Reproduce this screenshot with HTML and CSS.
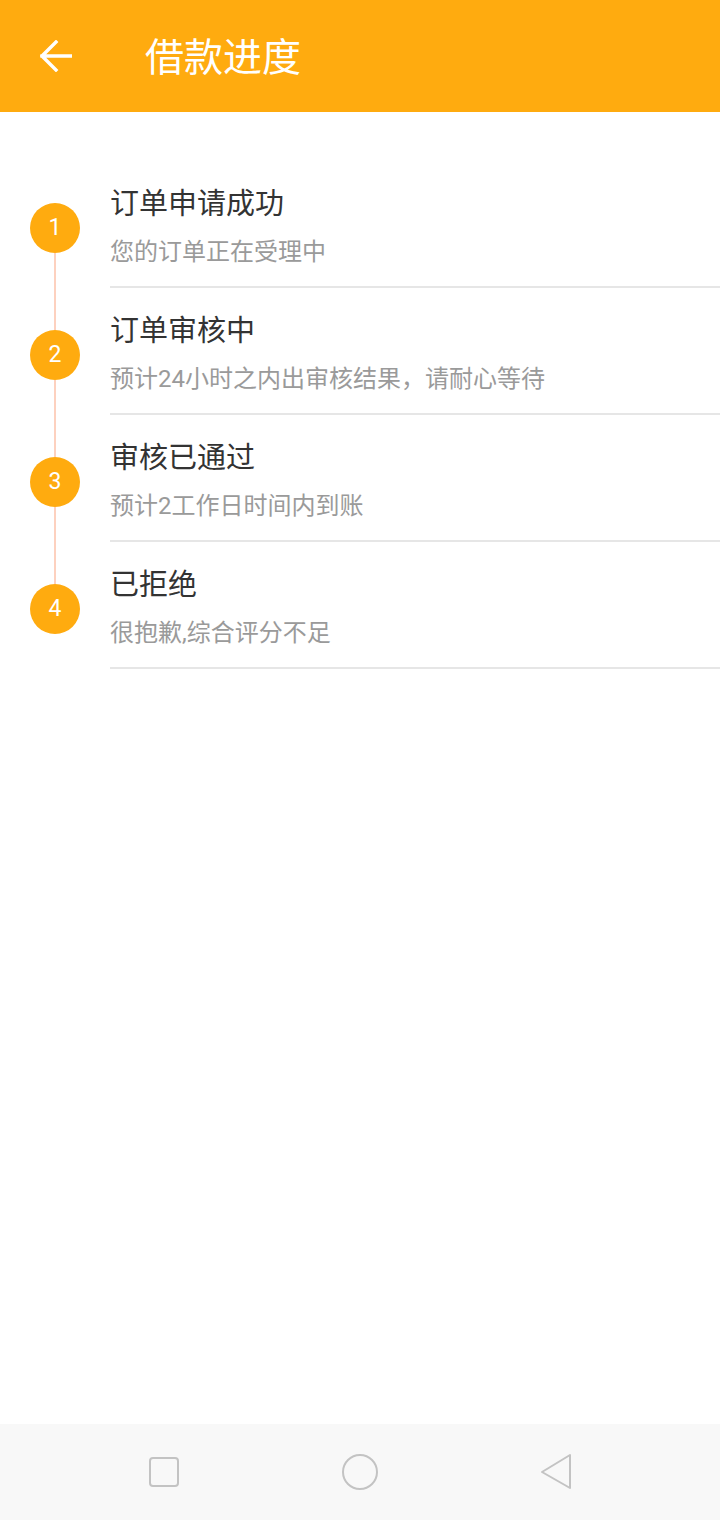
FILE: index.html
```html
<!DOCTYPE html>
<html lang="zh-CN">
<head>
  <meta charset="UTF-8" />
  <title>借款进度</title>
  <meta name="viewport" content="width=device-width, initial-scale=1" />
  <link rel="stylesheet" href="styles.css">
</head>
<body>
  <header class="topbar">
    <span class="back">
      <svg width="32" height="32" viewBox="0 0 32 32">
        <path d="M2 16 H31 M16 2 L2 16 L16 30" fill="none" stroke="#fff" stroke-width="3.4" stroke-linecap="square" />
      </svg>
    </span>
    <h1>借款进度</h1>
  </header>

  <main class="steps">
    <div class="step first">
      <div class="marker">
        <span class="seg seg-top"></span>
        <span class="dot">1</span>
        <span class="seg seg-bottom"></span>
      </div>
      <div class="info">
        <div class="title">订单申请成功</div>
        <div class="desc">您的订单正在受理中</div>
      </div>
    </div>
    <div class="step">
      <div class="marker">
        <span class="seg seg-top"></span>
        <span class="dot">2</span>
        <span class="seg seg-bottom"></span>
      </div>
      <div class="info">
        <div class="title">订单审核中</div>
        <div class="desc">预计24小时之内出审核结果，请耐心等待</div>
      </div>
    </div>
    <div class="step">
      <div class="marker">
        <span class="seg seg-top"></span>
        <span class="dot">3</span>
        <span class="seg seg-bottom"></span>
      </div>
      <div class="info">
        <div class="title">审核已通过</div>
        <div class="desc">预计2工作日时间内到账</div>
      </div>
    </div>
    <div class="step last">
      <div class="marker">
        <span class="seg seg-top"></span>
        <span class="dot">4</span>
        <span class="seg seg-bottom"></span>
      </div>
      <div class="info">
        <div class="title">已拒绝</div>
        <div class="desc">很抱歉,综合评分不足</div>
      </div>
    </div>
  </main>

  <nav class="navbar">
    <span class="nav-btn">
      <svg width="40" height="40" viewBox="0 0 40 40">
        <rect x="6" y="6" width="28" height="28" rx="3" fill="none" stroke="#c3c3c3" stroke-width="2" />
      </svg>
    </span>
    <span class="nav-btn">
      <svg width="40" height="40" viewBox="0 0 40 40">
        <circle cx="20" cy="20" r="17" fill="none" stroke="#c3c3c3" stroke-width="2" />
      </svg>
    </span>
    <span class="nav-btn">
      <svg width="40" height="40" viewBox="0 0 40 40">
        <path d="M34 3 L34 36 L6 20 Z" fill="none" stroke="#c3c3c3" stroke-width="2" stroke-linejoin="round" />
      </svg>
    </span>
  </nav>
</body>
</html>
```

FILE: styles.css
```css
body {
  margin: 0;
  height: 1520px;
  display: flex;
  flex-direction: column;
  font-family: Roboto, "Noto Sans CJK SC", sans-serif;
  background: #fff;
}
.topbar {
  height: 112px;
  flex-shrink: 0;
  background: #ffab0f;
  display: flex;
  align-items: center;
  padding-left: 40px;
  box-sizing: border-box;
}
.back {
  width: 32px;
  height: 32px;
  display: flex;
}
.topbar h1 {
  margin: 0 0 0 73px;
  font-size: 39px;
  font-weight: normal;
  color: #fff;
  line-height: 44px;
  padding-top: 4px;
}
.steps {
  flex: 1;
  padding-top: 49px;
}
.step {
  display: flex;
  height: 127px;
}
.marker {
  width: 110px;
  flex-shrink: 0;
  display: flex;
  flex-direction: column;
  align-items: center;
}
.seg {
  width: 2px;
  background: #fdd1bf;
}
.seg-top {
  height: 42px;
}
.seg-bottom {
  flex: 1;
}
.first .seg-top,
.last .seg-bottom {
  background: transparent;
}
.dot {
  width: 50px;
  height: 50px;
  border-radius: 50%;
  background: #ffab0f;
  color: #fff;
  font-size: 23px;
  line-height: 50px;
  text-align: center;
  flex-shrink: 0;
}
.info {
  flex: 1;
  border-bottom: 2px solid #e6e6e6;
  padding-top: 23px;
  box-sizing: border-box;
}
.title {
  font-size: 29px;
  line-height: 40px;
  color: #333;
}
.desc {
  margin-top: 12px;
  font-size: 24px;
  line-height: 32px;
  color: #9a9a9a;
}
.navbar {
  height: 96px;
  flex-shrink: 0;
  background: #f8f8f8;
  display: flex;
  justify-content: center;
  align-items: center;
  gap: 156px;
}
.nav-btn {
  width: 40px;
  height: 40px;
  display: flex;
}
```
